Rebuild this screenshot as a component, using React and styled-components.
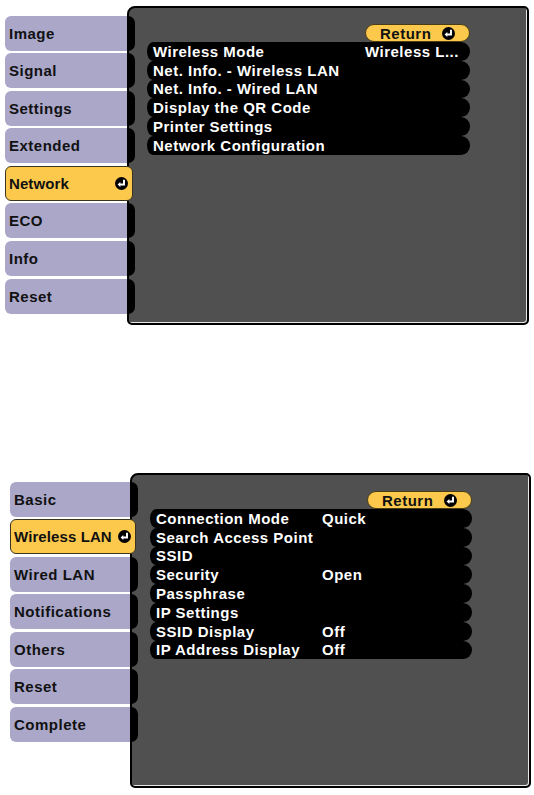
import React from 'react';
import styled, { createGlobalStyle } from 'styled-components';

const GlobalStyle = createGlobalStyle`
  body {
    margin: 0;
    background: #ffffff;
    font-family: "Liberation Sans", Arial, sans-serif;
  }
`;

const Page = styled.div`
  width: 534px;
  height: 795px;
  overflow: hidden;
`;

const Screen = styled.div`
  display: flex;
  align-items: flex-start;
  margin-top: ${p => p.$top}px;
  padding-left: ${p => p.$left}px;
`;

const TabColumn = styled.div`
  position: relative;
  z-index: 1;
  width: ${p => p.$width}px;
  margin-right: -8px;
  padding-top: ${p => p.$offset}px;
  display: flex;
  flex-direction: column;
  gap: 2.6px;
  flex-shrink: 0;
`;

const Tab = styled.div`
  display: flex;
  height: 35px;
`;

const TabBody = styled.div`
  flex: 1;
  display: flex;
  align-items: center;
  padding-left: 4px;
  background: #aaa7c9;
  border-radius: 6px 0 0 6px;
  font-size: 15px;
  font-weight: bold;
  letter-spacing: 0.5px;
  color: #111;
`;

const TabCap = styled.div`
  width: 8px;
  background: #000;
  border-radius: 0 7px 7px 0;
`;

const ActiveTab = styled.div`
  display: flex;
  align-items: center;
  justify-content: space-between;
  height: 35px;
  width: calc(100% - 2px);
  box-sizing: border-box;
  padding: 0 4px 0 3px;
  background: #fcc94c;
  border: 1px solid #3a3320;
  border-radius: 6px;
  font-size: 15px;
  font-weight: bold;
  letter-spacing: 0.1px;
  color: #111;
  white-space: nowrap;
`;

const Panel = styled.div`
  box-sizing: border-box;
  width: ${p => p.$width}px;
  height: ${p => p.$height}px;
  background: #505050;
  border: 2px solid #000;
  border-radius: 8px 5px 5px 5px;
  box-shadow: inset -1px -1px 0 #e8e8e8;
  padding: 16px 57px 0 18px;
  display: flex;
  flex-direction: column;
`;

const ReturnButton = styled.div`
  align-self: flex-end;
  box-sizing: border-box;
  width: 105px;
  height: 18px;
  display: flex;
  align-items: center;
  gap: 11px;
  padding-left: 14px;
  background: #fcc94c;
  border: 1px solid #4a3d16;
  border-radius: 9px;
  font-size: 15px;
  font-weight: bold;
  letter-spacing: 0.5px;
  color: #111;
`;

const Row = styled.div`
  display: grid;
  grid-template-columns: ${p => p.$labelWidth}px 1fr;
  align-items: center;
  height: 18.8px;
  padding-left: 6px;
  background: #000;
  border-radius: 6px 9px 9px 6px / 9.4px;
  font-size: 15px;
  font-weight: bold;
  letter-spacing: 0.5px;
  color: #fff;
  white-space: nowrap;
  overflow: hidden;
`;

const Cell = styled.span`
  line-height: 1;
`;

const EnterIcon = () => (
  <svg width="13" height="13" viewBox="0 0 12 12" style={{ flexShrink: 0 }}>
    <circle cx="6" cy="6" r="6" fill="#000" />
    <path d="M8.3 2.6 V6.9 H4.2" fill="none" stroke="#fff" strokeWidth="1.8" />
    <path d="M2.4 6.9 L4.9 4.6 L4.9 9.2 Z" fill="#fff" />
  </svg>
);

const MenuScreen = ({ top, left, tabWidth, tabOffset, panelWidth, panelHeight, labelWidth, tabs, active, rows }) => (
  <Screen $top={top} $left={left}>
    <TabColumn $width={tabWidth} $offset={tabOffset}>
      {tabs.map(name =>
        name === active ? (
          <ActiveTab key={name}>
            {name}
            <EnterIcon />
          </ActiveTab>
        ) : (
          <Tab key={name}>
            <TabBody>{name}</TabBody>
            <TabCap />
          </Tab>
        )
      )}
    </TabColumn>
    <Panel $width={panelWidth} $height={panelHeight}>
      <ReturnButton>
        Return
        <EnterIcon />
      </ReturnButton>
      {rows.map(([label, value]) => (
        <Row key={label} $labelWidth={labelWidth}>
          <Cell>{label}</Cell>
          <Cell>{value}</Cell>
        </Row>
      ))}
    </Panel>
  </Screen>
);

const App = () => (
  <Page>
    <GlobalStyle />
    <MenuScreen
      top={6}
      left={5}
      tabWidth={130}
      tabOffset={9.5}
      panelWidth={402}
      panelHeight={319}
      labelWidth={212}
      tabs={['Image', 'Signal', 'Settings', 'Extended', 'Network', 'ECO', 'Info', 'Reset']}
      active="Network"
      rows={[
        ['Wireless Mode', 'Wireless L...'],
        ['Net. Info. - Wireless LAN', ''],
        ['Net. Info. - Wired LAN', ''],
        ['Display the QR Code', ''],
        ['Printer Settings', ''],
        ['Network Configuration', ''],
      ]}
    />
    <MenuScreen
      top={148}
      left={10}
      tabWidth={128}
      tabOffset={8.5}
      panelWidth={401}
      panelHeight={315}
      labelWidth={166}
      tabs={['Basic', 'Wireless LAN', 'Wired LAN', 'Notifications', 'Others', 'Reset', 'Complete']}
      active="Wireless LAN"
      rows={[
        ['Connection Mode', 'Quick'],
        ['Search Access Point', ''],
        ['SSID', ''],
        ['Security', 'Open'],
        ['Passphrase', ''],
        ['IP Settings', ''],
        ['SSID Display', 'Off'],
        ['IP Address Display', 'Off'],
      ]}
    />
  </Page>
);

export default App;
